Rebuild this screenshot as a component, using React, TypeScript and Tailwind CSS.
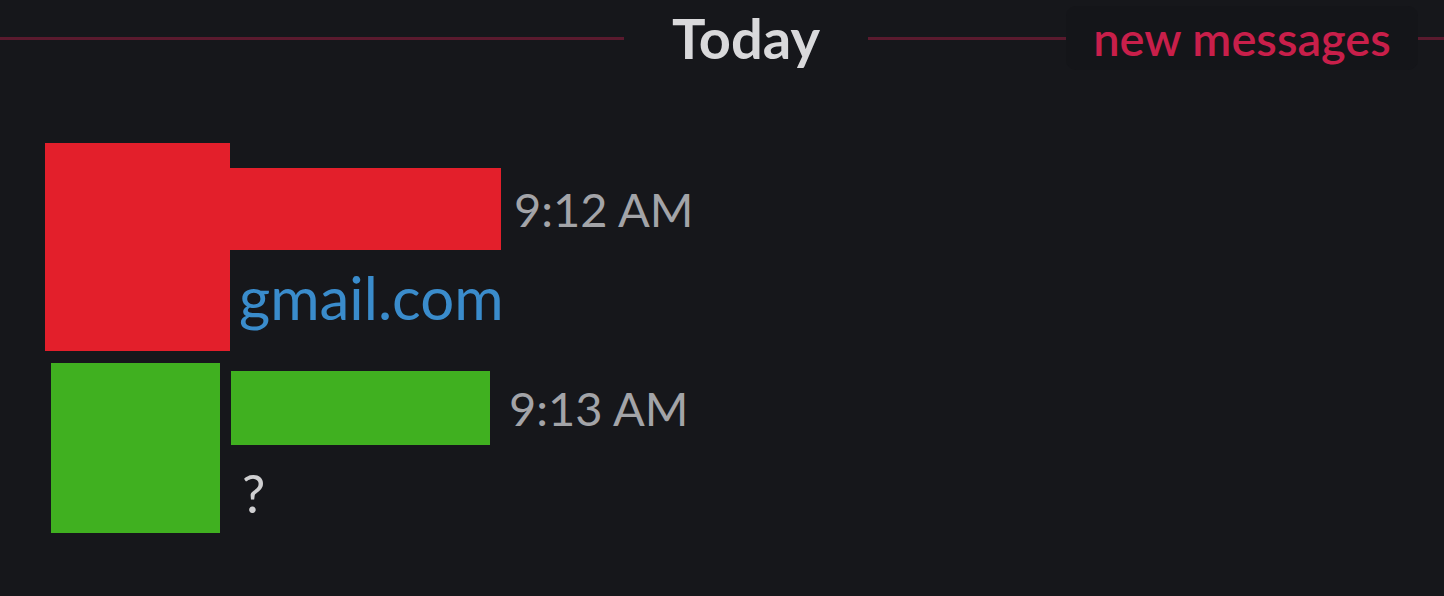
export default function App() {
  return (
    <div className="h-[596px] w-[1444px] overflow-hidden bg-[#16171b]" style={{ fontFamily: 'Lato, "Noto Sans", sans-serif' }}>
      {/* day divider */}
      <div className="flex h-[76px] items-center">
        <div className="h-[3px] w-[624px] bg-[#5a1a2e]" />
        <div className="w-[244px] text-center text-[56px] font-bold leading-none text-[#d9d9db]">Today</div>
        <div className="h-[3px] w-[198px] bg-[#5a1a2e]" />
        <div className="flex h-[64px] w-[352px] items-center justify-center rounded-[10px] bg-[#141519] text-[47px] font-semibold leading-none text-[#c81f4a]">
          new messages
        </div>
        <div className="h-[3px] flex-1 bg-[#5a1a2e]" />
      </div>

      {/* message 1 */}
      <div className="mt-[67px] flex">
        <div className="ml-[45px] h-[208px] w-[185px] bg-[#e31f2b]" />
        <div className="flex flex-col">
          <div className="mt-[25px] flex items-center">
            <div className="ml-[-6px] h-[82px] w-[277px] bg-[#e31f2b]" />
            <span className="ml-[13px] text-[47px] leading-none text-[#a3a4a8]">9:12 AM</span>
          </div>
          <div className="ml-[9px] mt-[17px] text-[60px] leading-none text-[#3a8ccc]">gmail.com</div>
        </div>
      </div>

      {/* message 2 */}
      <div className="mt-[12px] flex">
        <div className="ml-[51px] h-[170px] w-[169px] bg-[#40b020]" />
        <div className="flex flex-col">
          <div className="mt-[8px] flex items-center">
            <div className="ml-[11px] h-[74px] w-[259px] bg-[#40b020]" />
            <span className="ml-[19px] text-[47px] leading-none text-[#a3a4a8]">9:13 AM</span>
          </div>
          <div className="ml-[22px] mt-[22px] text-[52px] leading-none text-[#cfcfd1]">?</div>
        </div>
      </div>
    </div>
  );
}
